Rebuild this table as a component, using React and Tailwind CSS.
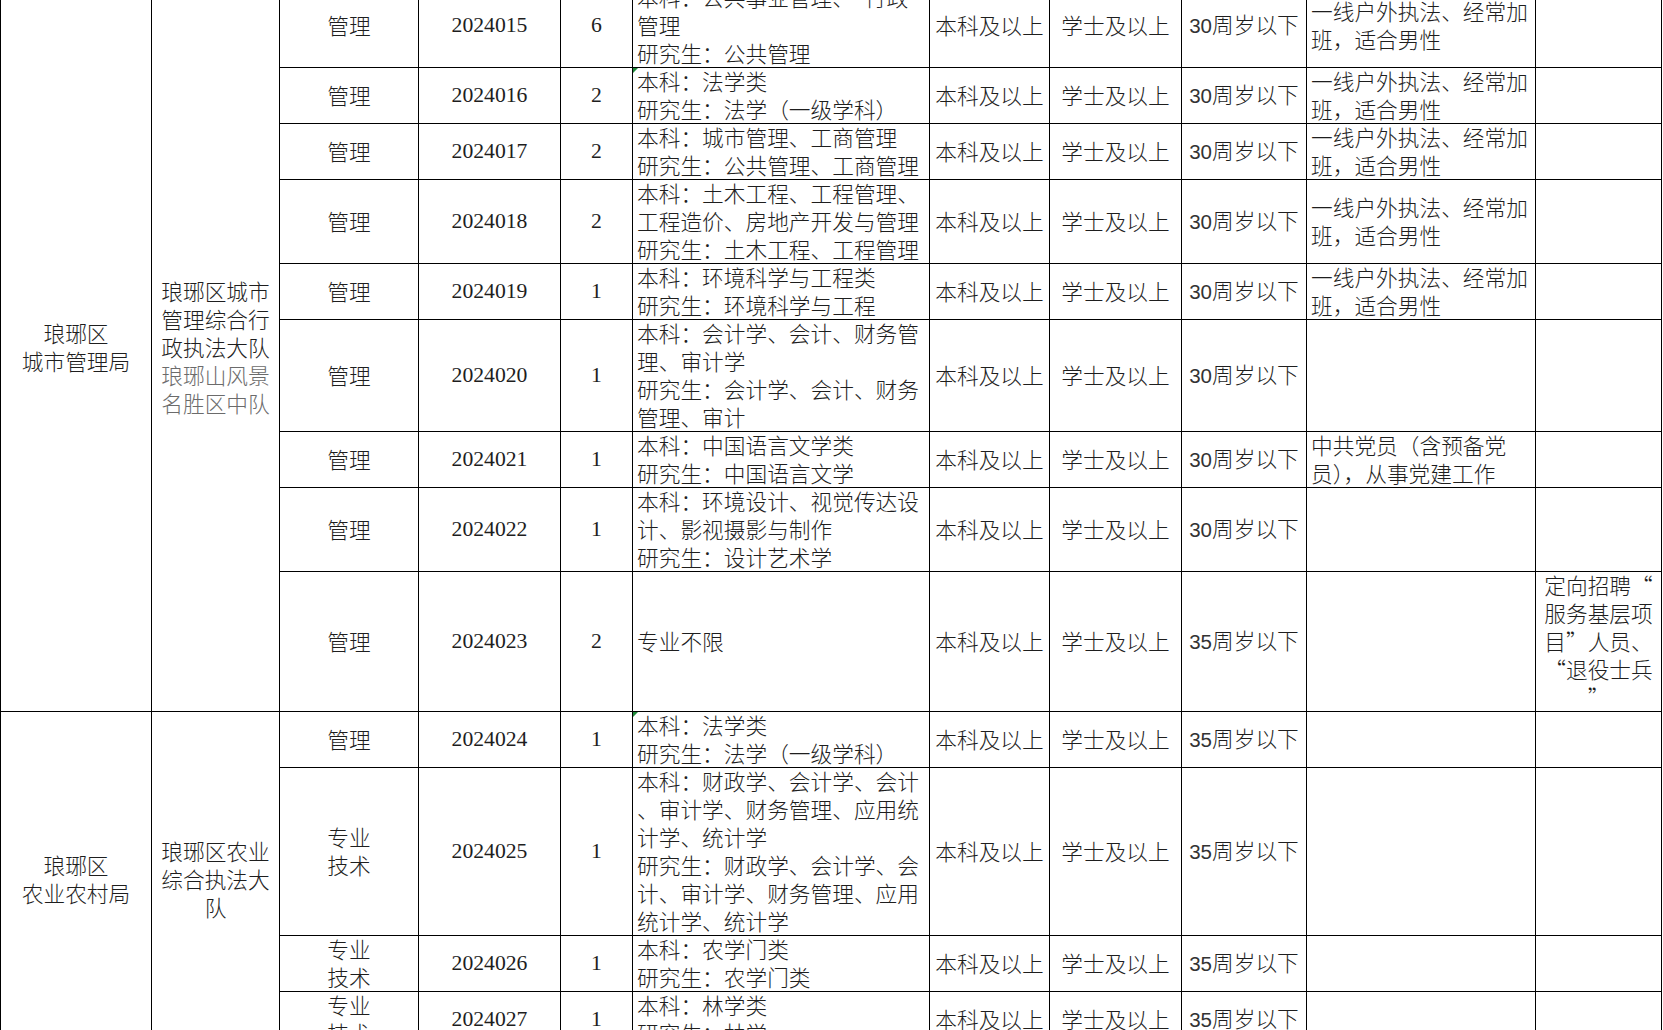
import React from "react";

const rows = [
  { code: "2024015", type: ["管理"], n: "6", major: ["本科：公共事业管理、\u2002行政", "管理", "研究生：公共管理"], edu: "本科及以上", deg: "学士及以上", age: "30", note: ["一线户外执法、经常加", "班，适合男性"], extra: [] },
  { code: "2024016", type: ["管理"], n: "2", major: ["本科：法学类", "研究生：法学（一级学科）"], edu: "本科及以上", deg: "学士及以上", age: "30", note: ["一线户外执法、经常加", "班，适合男性"], extra: [], flag: true },
  { code: "2024017", type: ["管理"], n: "2", major: ["本科：城市管理、工商管理", "研究生：公共管理、工商管理"], edu: "本科及以上", deg: "学士及以上", age: "30", note: ["一线户外执法、经常加", "班，适合男性"], extra: [] },
  { code: "2024018", type: ["管理"], n: "2", major: ["本科：土木工程、工程管理、", "工程造价、房地产开发与管理", "研究生：土木工程、工程管理"], edu: "本科及以上", deg: "学士及以上", age: "30", note: ["一线户外执法、经常加", "班，适合男性"], extra: [] },
  { code: "2024019", type: ["管理"], n: "1", major: ["本科：环境科学与工程类", "研究生：环境科学与工程"], edu: "本科及以上", deg: "学士及以上", age: "30", note: ["一线户外执法、经常加", "班，适合男性"], extra: [] },
  { code: "2024020", type: ["管理"], n: "1", major: ["本科：会计学、会计、财务管", "理、审计学", "研究生：会计学、会计、财务", "管理、审计"], edu: "本科及以上", deg: "学士及以上", age: "30", note: [], extra: [] },
  { code: "2024021", type: ["管理"], n: "1", major: ["本科：中国语言文学类", "研究生：中国语言文学"], edu: "本科及以上", deg: "学士及以上", age: "30", note: ["中共党员（含预备党", "员），从事党建工作"], extra: [] },
  { code: "2024022", type: ["管理"], n: "1", major: ["本科：环境设计、视觉传达设", "计、影视摄影与制作", "研究生：设计艺术学"], edu: "本科及以上", deg: "学士及以上", age: "30", note: [], extra: [] },
  { code: "2024023", type: ["管理"], n: "2", major: ["专业不限"], edu: "本科及以上", deg: "学士及以上", age: "35", note: [], extra: ["定向招聘“", "服务基层项", "目”人员、", "“退役士兵", "”"] },
  { code: "2024024", type: ["管理"], n: "1", major: ["本科：法学类", "研究生：法学（一级学科）"], edu: "本科及以上", deg: "学士及以上", age: "35", note: [], extra: [], flag: true },
  { code: "2024025", type: ["专业", "技术"], n: "1", major: ["本科：财政学、会计学、会计", "、审计学、财务管理、应用统", "计学、统计学", "研究生：财政学、会计学、会", "计、审计学、财务管理、应用", "统计学、统计学"], edu: "本科及以上", deg: "学士及以上", age: "35", note: [], extra: [] },
  { code: "2024026", type: ["专业", "技术"], n: "1", major: ["本科：农学门类", "研究生：农学门类"], edu: "本科及以上", deg: "学士及以上", age: "35", note: [], extra: [] },
  { code: "2024027", type: ["专业", "技术"], n: "1", major: ["本科：林学类", "研究生：林学"], edu: "本科及以上", deg: "学士及以上", age: "35", note: [], extra: [] },
];

const base = "border-r border-b border-black flex flex-col justify-center pb-[2px] whitespace-nowrap";
const center = base + " items-center text-center";
const left = base + " items-start text-left pl-[4px] relative";

function Lines({ items }) {
  return items.map((t, i) => <div key={i}>{t}</div>);
}

function Row({ r }) {
  return (
    <>
      <div className={center}>
        <Lines items={r.type} />
      </div>
      <div className={center + " font-['Liberation_Serif','Noto_Sans_CJK_SC',serif]"}>{r.code}</div>
      <div className={center + " font-['Liberation_Serif','Noto_Sans_CJK_SC',serif]"}>{r.n}</div>
      <div className={left}>
        {r.flag && (
          <div className="absolute left-0 top-0 w-0 h-0 border-t-[5px] border-r-[5px] border-t-[#1f8a3a] border-r-transparent" />
        )}
        <Lines items={r.major} />
      </div>
      <div className={center}>{r.edu}</div>
      <div className={center}>{r.deg}</div>
      <div className={center}>
        <div>
          <span className="font-['Liberation_Sans',sans-serif] text-[20.5px] text-[#333]">{r.age}</span>周岁以下
        </div>
      </div>
      <div className={left}>
        <Lines items={r.note} />
      </div>
      <div className={center}>
        <Lines items={r.extra} />
      </div>
    </>
  );
}

export default function App() {
  const first = rows.slice(0, 9);
  const second = rows.slice(9);
  return (
    <div className="w-[1663px] h-[1030px] overflow-hidden bg-white">
      <div className="-mt-[17px] grid grid-cols-[151px_128px_139px_142px_72px_297px_120px_132px_125px_229px_126px] grid-rows-[84px_56px_56px_84px_56px_112px_56px_84px_140px_56px_168px_56px_56px] w-[1662px] border-l border-t border-black font-['Noto_Sans_CJK_SC','Noto_Sans',sans-serif] text-[21.7px] leading-[28px] text-[#1e1e1e] font-light">
        <div className={center + " row-span-9"}>
          <div>琅琊区</div>
          <div>城市管理局</div>
        </div>
        <div className={center + " row-span-9"}>
          <div>琅琊区城市</div>
          <div>管理综合行</div>
          <div>政执法大队</div>
          <div className="text-[#6b6b6b]">琅琊山风景</div>
          <div className="text-[#6b6b6b]">名胜区中队</div>
        </div>
        {first.map((r) => (
          <Row key={r.code} r={r} />
        ))}
        <div className={center + " row-span-4"}>
          <div>琅琊区</div>
          <div>农业农村局</div>
        </div>
        <div className={center + " row-span-4"}>
          <div>琅琊区农业</div>
          <div>综合执法大</div>
          <div>队</div>
        </div>
        {second.map((r) => (
          <Row key={r.code} r={r} />
        ))}
      </div>
    </div>
  );
}
